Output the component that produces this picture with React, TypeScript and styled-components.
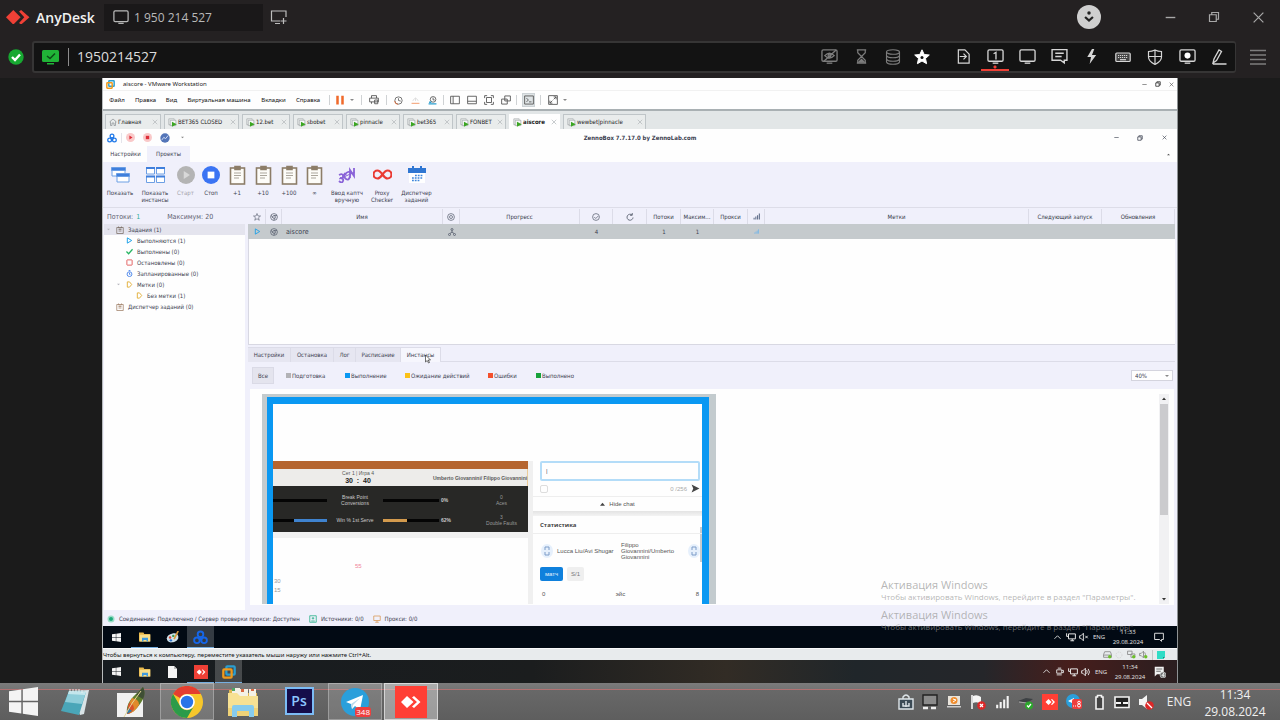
import React from "react";
import styled, { createGlobalStyle, css } from "styled-components";

const ui = `"Open Sans", "Noto Sans", sans-serif`;
const vmFont = `"Noto Sans", "Open Sans", sans-serif`;
const tahoma = `"DejaVu Sans Condensed", "DejaVu Sans", sans-serif`;

const Global = createGlobalStyle`
  * { box-sizing: border-box; }
  html, body { margin: 0; background: #1b1b1b; }
  body { font-family: ${ui}; }
  button, input, select { font: inherit; color: inherit; margin: 0; padding: 0; border: 0; background: none; border-radius: 0; }
  button { display: flex; align-items: center; justify-content: center; white-space: nowrap; }
  svg { display: block; flex: none; }
`;

/* ---------- shared ---------- */

type GlyphProps = {
  w?: number;
  h?: number;
  box?: string;
  color?: string;
  fill?: string;
  sw?: number;
  children: React.ReactNode;
};

const Glyph = ({ w = 16, h, box = "0 0 16 16", color = "currentColor", fill = "none", sw = 1, children }: GlyphProps) => (
  <svg width={w} height={h ?? w} viewBox={box} fill={fill} stroke={color} strokeWidth={sw} aria-hidden="true">
    {children}
  </svg>
);

const Spacer = styled.div`
  flex: 1;
`;

const Slot = styled.button<{ $w: number }>`
  width: ${(p) => p.$w}px;
  height: 100%;
  flex: none;
`;

const Divider = styled.span<{ $before?: number; $after?: number; $h?: number; $color?: string }>`
  width: 1px;
  height: ${(p) => p.$h ?? 10}px;
  flex: none;
  margin: 0 ${(p) => p.$after ?? 0}px 0 ${(p) => p.$before ?? 0}px;
  background: ${(p) => p.$color ?? "#cfd2d4"};
`;

const Shell = styled.div`
  display: flex;
  flex-direction: column;
  min-height: 100vh;
  overflow: hidden;
`;

/* ---------- AnyDesk frame ---------- */

const TitleBar = styled.header`
  display: flex;
  align-items: center;
  height: 36px;
  padding-bottom: 2px;
  background: #242122;
  color: #bdbdbd;
`;

const Brand = styled.div`
  display: flex;
  align-items: center;
  gap: 6px;
  width: 104px;
  padding-left: 6px;
  font-size: 14px;
  font-weight: 600;
  color: #f1f1f1;
  svg {
    color: #ef4036;
  }
`;

const SessionTab = styled.button`
  width: 159px;
  height: 27px;
  justify-content: flex-start;
  gap: 5px;
  padding-left: 9px;
  margin-right: 7px;
  background: #1a1819;
  font-size: 12px;
  color: #b9b9b9;
`;

const Avatar = styled.button`
  width: 24px;
  height: 24px;
  margin-right: 47px;
  border-radius: 50%;
  background: #cfcfcf;
`;

const AddressRow = styled.div`
  display: flex;
  align-items: center;
  height: 42px;
  padding-bottom: 1px;
  background: #242122;
`;

const Online = styled.div`
  width: 32px;
  display: flex;
  justify-content: center;
`;

const AddressBox = styled.div`
  flex: 1;
  display: flex;
  align-items: center;
  height: 32px;
  padding-left: 8px;
  border: 2px solid #363535;
  border-right-width: 1px;
  border-radius: 3px;
  background: #131313;
  color: #cfcfcf;
`;

const AddressInput = styled.input`
  flex: 1;
  min-width: 0;
  height: 24px;
  font-size: 14px;
  color: #dcdcdc;
  outline: none;
`;

const Action = styled(Slot)<{ $dim?: boolean; $active?: boolean }>`
  color: ${(p) => (p.$dim ? "#7d7d7d" : "#d6d6d6")};
  ${(p) =>
    p.$active &&
    css`
      background: radial-gradient(circle at 50% 24px, #ef4036 1px, transparent 2px),
        linear-gradient(#ef4036, #ef4036) bottom / 28px 2px no-repeat;
    `}
`;

/* ---------- remote screen ---------- */

const Remote = styled.main`
  flex: 1;
  position: relative;
  display: flex;
  flex-direction: column;
  margin: 0 102px;
  border-left: 1px solid #b9bcbd;
  border-right: 1px solid #8e9294;
  background: #fefefe;
  font-family: ${vmFont};
  font-size: 6px;
  line-height: 8px;
  color: #222;
`;

const VmTitle = styled.div`
  display: flex;
  align-items: center;
  height: 13px;
  padding-left: 3px;
  border-bottom: 1px solid #f1f1f1;
`;

const VmName = styled.span`
  padding-left: 8px;
`;

const VmMenu = styled.nav`
  display: flex;
  align-items: center;
  height: 20px;
  border-bottom: 2px solid #a9b0b3;
  color: #555;
`;

const MenuItem = styled.button<{ $w: number }>`
  width: ${(p) => p.$w}px;
  height: 100%;
  color: #111;
`;

const ToolSlot = styled(Slot)<{ $on?: boolean }>`
  height: 14px;
  ${(p) =>
    p.$on &&
    css`
      background: #dfe4e6;
      outline: 1px solid #ccd2d5;
      outline-offset: -1px;
    `}
`;

const VmTabs = styled.nav`
  display: flex;
  align-items: flex-end;
  gap: 3px;
  height: 18px;
  padding-left: 2px;
  background: #e2e6e7;
`;

const VmTab = styled.button<{ $w: number; $on?: boolean }>`
  width: ${(p) => p.$w}px;
  height: 15px;
  justify-content: flex-start;
  gap: 1px;
  padding: 0 2px 0 3px;
  border: 1px solid ${(p) => (p.$on ? "#fefefe" : "#bfc5c8")};
  border-bottom: 0;
  background: ${(p) => (p.$on ? "#fefefe" : "#e9ecec")};
  font-weight: ${(p) => (p.$on ? 700 : 400)};
  font-family: ${tahoma};
  span {
    flex: 1;
    text-align: left;
  }
`;

/* ---------- ZennoBox ---------- */

const Zenno = styled.section`
  flex: 1;
  display: flex;
  flex-direction: column;
  font-family: ${tahoma};
  color: #3c4150;
`;

const ZTitle = styled.div`
  display: grid;
  grid-template-columns: 1fr auto 1fr;
  align-items: center;
  height: 17px;
  font-weight: 700;
`;

const Quick = styled.div`
  display: flex;
  align-items: center;
  height: 17px;
`;

const WinButtons = styled(Quick)`
  justify-content: flex-end;
`;

const RibbonTabs = styled.div`
  display: flex;
  height: 16px;
  padding-left: 1px;
`;

const RibbonTab = styled.button<{ $on?: boolean }>`
  width: 43px;
  background: ${(p) => (p.$on ? "#f0f0fb" : "transparent")};
`;

const Ribbon = styled.div`
  display: flex;
  height: 46px;
  background: #f0f0fb;
  border-bottom: 1px solid #dddde8;
`;

const RibbonButton = styled.button<{ $w: number; $off?: boolean }>`
  width: ${(p) => p.$w}px;
  flex-direction: column;
  justify-content: flex-start;
  padding-top: 2px;
  gap: 4px;
  line-height: 7px;
  color: ${(p) => (p.$off ? "#a0a0a8" : "#3c4150")};
  span {
    white-space: pre;
  }
`;

const RibbonArt = styled.i`
  display: flex;
  align-items: center;
  justify-content: center;
  height: 21px;
`;

const Work = styled.div`
  flex: 1;
  display: grid;
  grid-template-columns: 141px minmax(0, 1fr);
  gap: 3px;
  padding: 1px 2px 0 1px;
  background: #f0f0fb;
`;

const Side = styled.aside`
  background: #fefefe;
  margin-bottom: 1px;
`;

const Counts = styled.div`
  display: flex;
  align-items: center;
  gap: 27px;
  height: 15px;
  padding-left: 3px;
  font-size: 7px;
  background: #f0f0fb;
  color: #5d6070;
  b {
    font-weight: 400;
    color: #2fae9a;
    padding-left: 1px;
  }
`;

const Tree = styled.ul`
  list-style: none;
  margin: 0;
  padding: 0;
`;

const TreeRow = styled.li<{ $depth: number; $on?: boolean }>`
  display: flex;
  align-items: center;
  gap: 4px;
  height: 11px;
  padding-left: ${(p) => 3 + p.$depth * 10}px;
  background: ${(p) => (p.$on ? "#e4e4ee" : "transparent")};
`;

const Caret = styled.span`
  display: flex;
  width: 5px;
`;

const Right = styled.div`
  display: flex;
  flex-direction: column;
  min-width: 0;
`;

const TablePane = styled.div`
  height: 136px;
  background: #fefefe;
  box-shadow: inset 1px -1px 0 #d8d8e2;
`;

const Grid = styled.table`
  width: 100%;
  table-layout: fixed;
  border-collapse: separate;
  border-spacing: 0;
  th,
  td {
    height: 15px;
    padding: 0;
    text-align: center;
    font-weight: 400;
  }
  th {
    background: #f0f0fb;
    border-right: 1px solid #dcdce8;
    color: #333847;
  }
  td {
    background: #c5cacd;
  }
  svg {
    margin: 0 auto;
  }
`;

const NameCell = styled.td`
  && {
    text-align: left;
    padding-left: 4px;
    font-size: 7px;
  }
`;

const PaneTabs = styled.div`
  display: flex;
  height: 15px;
  margin-top: 2px;
  border-bottom: 1px solid #dcdce8;
`;

const PaneTab = styled.button<{ $w: number; $on?: boolean }>`
  width: ${(p) => p.$w}px;
  height: 15px;
  border: 1px solid #dcdce8;
  border-left-width: 0;
  border-bottom: 0;
  background: ${(p) => (p.$on ? "#f6f6fd" : "#e6e6f1")};
`;

const Filters = styled.div`
  display: flex;
  align-items: center;
  height: 27px;
  padding: 0 2px 0 4px;
`;

const AllButton = styled.button`
  width: 22px;
  height: 17px;
  margin-right: 12px;
  border: 1px solid #dadae6;
  background: #e4e4ee;
`;

const Legend = styled.button<{ $w: number; $c: string }>`
  width: ${(p) => p.$w}px;
  justify-content: flex-start;
  gap: 1px;
  &::before {
    content: "";
    width: 5px;
    height: 5px;
    background: ${(p) => p.$c};
  }
`;

const ZoomBox = styled.label`
  display: flex;
  align-items: center;
  width: 42px;
  height: 11px;
  padding-right: 3px;
  border: 1px solid #d4d4de;
  background: #fefefe;
`;

const ZoomSelect = styled.select`
  flex: 1;
  appearance: none;
  padding-left: 3px;
  line-height: 8px;
  outline: none;
`;

const Viewer = styled.div`
  flex: 1;
  display: flex;
  justify-content: space-between;
  align-items: stretch;
  margin: 0 1px 6px 2px;
  padding: 5px 5px 1px 12px;
  background: #fefefe;
`;

const Scroll = styled.div`
  display: flex;
  flex-direction: column;
  align-items: center;
  width: 10px;
  background: #f1f1f3;
`;

const Thumb = styled.div`
  width: 8px;
  height: 111px;
  margin-bottom: auto;
  background: #cbcbce;
`;

/* ---------- browser instance preview ---------- */

const Instance = styled.div`
  display: flex;
  width: 454px;
  padding: 3px 7px 0 5px;
  background: #c3cbce;
`;

const Page = styled.div`
  flex: 1;
  display: grid;
  grid-template-columns: 255px 5px minmax(0, 1fr);
  padding-top: 57px;
  border: 7px solid #0a98f2;
  border-left-width: 6px;
  border-bottom: 0;
  background: #fefefe;
  font-family: "Liberation Sans", sans-serif;
  font-size: 6px;
  line-height: 6px;
`;

const Clay = styled.div`
  height: 8px;
  background: #b5652f;
`;

const Score = styled.div`
  display: grid;
  grid-template-columns: 150px 1fr;
  align-items: center;
  height: 17px;
  padding: 0 3px 0 10px;
  border-right: 1px solid #eccb98;
  background: #edecea;
  color: #555;
  font-size: 5px;
  text-align: center;
`;

const Points = styled.strong`
  display: block;
  font-size: 7px;
  line-height: 9px;
  color: #222;
  white-space: pre;
`;

const Player = styled.b`
  justify-self: end;
  white-space: nowrap;
  color: #5a5a5a;
`;

const Stats = styled.div`
  height: 46px;
  padding-top: 4px;
  background: #282826;
  color: #c9c9c9;
  font-size: 5px;
`;

const StatRow = styled.div`
  display: grid;
  grid-template-columns: 54px 56px 56px 36px 1fr;
  align-items: center;
  height: 20px;
  text-align: center;
  div:last-child {
    color: #9a9a9a;
  }
`;

const Bar = styled.i<{ $from: number; $to: number; $c: string }>`
  height: 3px;
  background: linear-gradient(
    90deg,
    #050505 ${(p) => p.$from}%,
    ${(p) => p.$c} ${(p) => p.$from}% ${(p) => p.$to}%,
    #050505 ${(p) => p.$to}%
  );
`;

const Percent = styled.b`
  padding-left: 2px;
  text-align: left;
  font-size: 5px;
`;

const Strip = styled.div`
  height: 6px;
  background: #f1f1f1;
`;

const Gutter = styled.div`
  background: #f0f0f0;
`;

const Feed = styled.div`
  display: flex;
  flex-direction: column;
  gap: 3px;
  padding: 25px 1px 0;
  color: #999;
`;

const Hot = styled.span`
  padding: 0 0 6px 81px;
  color: #f0849b;
`;

const Chat = styled.div`
  display: flex;
  flex-direction: column;
  background: linear-gradient(#c9cbcd, #c9cbcd) right 66px / 2px 35px no-repeat;
  color: #555;
`;

const ChatInput = styled.input`
  height: 20px;
  margin: 0 2px 0 7px;
  padding-left: 4px;
  border: 2px solid #b3dcf8;
  border-radius: 2px;
  outline: none;
`;

const ChatTools = styled.div`
  display: flex;
  align-items: center;
  height: 16px;
  padding: 0 2px 0 7px;
  gap: 4px;
  border-bottom: 1px solid #eee;
  color: #aaa;
`;

const Tick = styled.input`
  appearance: none;
  && {
    width: 8px;
    height: 8px;
    margin-right: auto;
    border: 1px solid #ddd;
    border-radius: 2px;
  }
`;

const HideChat = styled.button`
  height: 14px;
  gap: 4px;
`;

const Band = styled.div`
  height: 5px;
  background: linear-gradient(#e3e3e3, #f4f4f4);
`;

const StatsHead = styled.b`
  padding: 6px 0 5px 7px;
  border-bottom: 1px solid #eee;
  font-family: ${ui};
  color: #444;
`;

const Versus = styled.div`
  display: grid;
  grid-template-columns: 12px 60px 1fr 14px;
  align-items: center;
  column-gap: 4px;
  height: 33px;
  padding-left: 8px;
`;

const Shirt = styled.i`
  display: flex;
  align-items: center;
  justify-content: center;
  width: 12px;
  height: 14px;
  border-radius: 50%;
  background: #e6f0fc;
`;

const Sets = styled.div`
  display: flex;
  gap: 4px;
  padding-left: 7px;
`;

const SetButton = styled.button<{ $on?: boolean }>`
  width: ${(p) => (p.$on ? 23 : 17)}px;
  height: 14px;
  border-radius: 2px;
  background: ${(p) => (p.$on ? "#0f80dc" : "#efefef")};
  color: ${(p) => (p.$on ? "#e8f3fc" : "#777")};
`;

const Totals = styled.div`
  display: flex;
  justify-content: space-between;
  padding: 10px 3px 0 9px;
`;

/* ---------- bottom bars ---------- */

const ZStatus = styled.footer`
  display: flex;
  align-items: center;
  gap: 4px;
  height: 15px;
  padding-left: 4px;
  background: #f0f0fb;
  span {
    padding-right: 5px;
  }
`;

const Taskbar = styled.footer<{ $tone: string; $h: number }>`
  display: flex;
  align-items: center;
  height: ${(p) => p.$h}px;
  padding-right: 7px;
  background: ${(p) => p.$tone};
  color: #e6e6e6;
  font-family: ${ui};
`;

const Apps = styled.div`
  display: flex;
  gap: 1px;
  height: 100%;
`;

const App28 = styled.button<{ $run?: boolean; $on?: boolean }>`
  width: 27px;
  height: 100%;
  background: ${(p) => (p.$on ? "rgba(255,255,255,.2)" : "transparent")};
  box-shadow: ${(p) => (p.$run ? "inset 0 -1px #76aee0" : "none")};
`;

const SmallClock = styled.time`
  width: 40px;
  text-align: center;
  line-height: 10px;
  white-space: pre;
`;

const VmStatus = styled.footer`
  display: flex;
  align-items: center;
  height: 12px;
  padding: 0 12px 0 0;
  border-top: 1px solid #fafafa;
  background: #e8ebed;
  color: #111;
`;

const Host = styled.footer`
  display: flex;
  height: 37px;
  background: linear-gradient(#7b7b7b, #747474 6px, #b07272 6px, #b07272 7px, #686868 7px, #5e5e5e);
  color: #f0f0f0;
  font-size: 12px;
  line-height: 17px;
`;

const StartButton = styled.button`
  width: 46px;
`;

const HostApp = styled.button<{ $open?: boolean; $on?: boolean }>`
  position: relative;
  width: 54px;
  margin-left: 2px;
  ${(p) =>
    p.$open &&
    css`
      background: rgba(255, 255, 255, 0.14);
      box-shadow: inset 0 0 0 1px rgba(255, 255, 255, 0.28);
    `}
  ${(p) =>
    p.$on &&
    css`
      background: rgba(255, 255, 255, 0.38);
      box-shadow: inset 0 0 0 1px rgba(255, 255, 255, 0.55);
    `}
`;

const Badge = styled.span`
  position: absolute;
  right: 11px;
  bottom: 3px;
  padding: 0 1px;
  border-radius: 3px;
  background: #ee3e3e;
  font-size: 8px;
  line-height: 10px;
  color: #fff;
`;

const PsTile = styled.span`
  display: flex;
  align-items: center;
  justify-content: center;
  width: 29px;
  height: 28px;
  margin-bottom: 2px;
  border: 2px solid #7cbcf5;
  background: #150d4a;
  color: #8cc6ff;
  font-size: 14px;
  font-weight: 600;
`;

const Lang = styled(Slot)`
  font-size: 12px;
`;

const HostClock = styled.time`
  width: 70px;
  margin-right: 10px;
  padding-top: 3px;
  text-align: center;
  white-space: pre;
`;

const Watermark = styled.div<{ $bottom: number }>`
  position: absolute;
  right: 32px;
  bottom: ${(p) => p.$bottom}px;
  width: 264px;
  color: rgba(150, 150, 150, 0.7);
  font-family: ${ui};
  font-size: 8px;
  line-height: 12px;
  white-space: nowrap;
  pointer-events: none;
  strong {
    display: block;
    font-size: 11px;
    font-weight: 400;
    line-height: 13px;
  }
`;

const Pointer = styled.div`
  position: absolute;
  left: 322px;
  top: 276px;
`;

/* ---------- icons ---------- */

const Screen = ({ children, w = 18 }: { children?: React.ReactNode; w?: number }) => (
  <Glyph w={w} h={(w * 16) / 18} box="0 0 18 16" sw={1.4}>
    <rect x="1" y="1" width="16" height="12" rx="1.4" />
    <path d="M6 15h6" />
    {children}
  </Glyph>
);

const WinLogo = ({ w }: { w: number }) => (
  <Glyph w={w} box="0 0 20 20" color="none" fill="#f4f4f4">
    <path d="M0 3 8.5 1.8V9.5H0zM9.5 1.6 20 0v9.5H9.5zM0 10.5h8.5v7.7L0 17zM9.5 10.5H20V20L9.5 18.4z" />
  </Glyph>
);

const AnyMark = ({ w }: { w: number }) => (
  <Glyph w={w} h={(w * 14) / 23} box="0 0 23 14" color="none" fill="currentColor">
    <path d="M7 0 14 7 7 14 0 7z" />
    <path d="M12.500 1.500 14.500 0l8 7-8 7-2-1.500L17.500 7z" />
  </Glyph>
);

const Trefoil = ({ w, c = "#1f78e8" }: { w: number; c?: string }) => (
  <Glyph w={w} color={c} sw={2}>
    <circle cx="8" cy="4.6" r="3" />
    <circle cx="4.2" cy="11" r="3" />
    <circle cx="11.8" cy="11" r="3" />
    <path d="M8 7v3M6 10h4" />
  </Glyph>
);

const VmwareMark = ({ w }: { w: number }) => (
  <Glyph w={w} sw={2.6}>
    <rect x="5" y="1.5" width="9.5" height="9.5" rx="1" stroke="#2b9fd0" />
    <rect x="1.5" y="5" width="9.5" height="9.5" rx="1" stroke="#f09a1c" />
  </Glyph>
);

const Folder = ({ w }: { w: number }) => (
  <Glyph w={w} box="0 0 32 32" color="none">
    <path d="M2 4h8l2 3h18v22H2z" fill="#dfb752" />
    <path d="M5 2h8v8H5zM13 3h8v7h-8zM22 3h7v7h-7z" fill="#f4f1e6" />
    <path d="M5 2h3v3H5z" fill="#4ca564" />
    <path d="M14 3h3v3h-3zM24 3h3v2h-3z" fill="#d9663f" />
    <path d="M1 7h9l3 3h18v20H1z" fill="#f7e193" />
    <path d="M1 22h30v8H1z" fill="#efd277" />
    <path d="M5 31V21q0-2 2-2h18q2 0 2 2v10h-5v-6H10v6z" fill="#86cbee" />
  </Glyph>
);

const SmallFolder = () => (
  <Glyph w={12} h={12} color="none">
    <path d="M0 2h6l1 2h8v10H0z" fill="#e8b84a" />
    <path d="M1 5h14v9H1z" fill="#f9df8c" />
    <path d="M4 14V9h8v5h-2v-2H6v2z" fill="#3f9be0" />
  </Glyph>
);

const MachineIcon = () => (
  <Glyph w={9} color="#8b9194">
    <path d="M4 12H1.5V1.5H11V3M4 4h10v9.500H4z" fill="#f6f8f8" />
    <path d="M7 6.500 15.500 11 7 15.500z" fill="#3aa521" stroke="none" />
  </Glyph>
);

const Cross = ({ w = 6, c = "#b6bbbe" }: { w?: number; c?: string }) => (
  <Glyph w={w} color={c} sw={w > 10 ? 1.5 : 2}>
    <path d="M2 2l12 12M14 2 2 14" />
  </Glyph>
);

const Minus = ({ w, c }: { w: number; c: string }) => (
  <Glyph w={w} color={c} sw={2}>
    <path d="M1 8h14" />
  </Glyph>
);

const Restore = ({ w, c, sw = 2 }: { w: number; c: string; sw?: number }) => (
  <Glyph w={w} color={c} sw={sw}>
    <path d="M2 5h9v9H2zM5 5V2h9v9h-3" />
  </Glyph>
);

const Down = ({ c = "#888", w = 4 }: { c?: string; w?: number }) => (
  <Glyph w={w} box="0 0 8 8" color="none" fill={c}>
    <path d="M0 2h8L4 6z" />
  </Glyph>
);

const Clipboard = () => (
  <Glyph w={17} h={20} box="0 0 17 20" color="#8c7d68" sw={1.6}>
    <rect x="1.500" y="3" width="14" height="16" fill="#fdfcf8" />
    <path d="M6 1.500h5v3H6z" fill="#8c7d68" />
    <path d="M5 8h7M5 10.500h7M5 13h5" stroke="#aaa59b" strokeWidth="1" />
  </Glyph>
);

const Disc = ({ w, outer, inner, square }: { w: number; outer: string; inner: string; square?: boolean }) => (
  <Glyph w={w} color="none">
    <circle cx="8" cy="8" r="8" fill={outer} />
    {square ? <path d="M5 5h6v6H5z" fill={inner} /> : <path d="M6 4.500 11.500 8 6 11.500z" fill={inner} />}
  </Glyph>
);

const Tag = () => (
  <Glyph w={7} color="#e0aa2c" sw={2}>
    <path d="M3 2h5l5 6-5 6H3z" />
  </Glyph>
);

const Signal = ({ c, w = 8 }: { c: string; w?: number }) => (
  <Glyph w={w} color={c} sw={2.4}>
    <path d="M2.500 15v-4M6.500 15V8M10.500 15V5M14.500 15V1" />
  </Glyph>
);

const Up = ({ w = 7 }: { w?: number }) => (
  <Glyph w={w} sw={2}>
    <path d="M1 11l7-7 7 7" />
  </Glyph>
);

const Net = () => (
  <Glyph w={10} sw={1.6}>
    <path d="M4 3h11v8H4zM7 14h6M10 11v3M1 2v5h3" />
  </Glyph>
);

const Speaker = ({ muted }: { muted?: boolean }) => (
  <Glyph w={10} sw={1.5}>
    <path d="M1 6h2l4-4v12l-4-4H1z" />
    {muted ? <path d="M10 6l4 4M14 6l-4 4" /> : <path d="M9 5q2 3 0 6M11.500 3q4 5 0 10" />}
  </Glyph>
);

const Note = () => (
  <Glyph w={10} sw={1.5}>
    <path d="M1 2h14v10h-3v3l-3-3H1z" />
  </Glyph>
);

const Tasks = ({ c = "#7d726b" }: { c?: string }) => (
  <Glyph w={8} color={c} sw={1.6}>
    <path d="M1.500 3h13v12h-13zM5 1v3h6V1M5 7h6M5 10h6" />
  </Glyph>
);

/* ---------- data ---------- */

const vmTabs: [string, number][] = [
  ["Главная", 56],
  ["BET365 CLOSED", 75],
  ["12.bet", 48],
  ["sbobet", 50],
  ["pinnacle", 54],
  ["bet365", 50],
  ["FONBET", 50],
  ["aiscore", 51],
  ["wewbet|pinnacle", 83],
];

const menu: [string, number][] = [
  ["Файл", 28],
  ["Правка", 29],
  ["Вид", 23],
  ["Виртуальная машина", 72],
  ["Вкладки", 37],
  ["Справка", 32],
];

const legend: [string, string, number][] = [
  ["Подготовка", "#b2b2b6", 59],
  ["Выполнение", "#0a98f2", 60],
  ["Ожидание действий", "#fbc117", 83],
  ["Ошибки", "#f4502c", 48],
  ["Выполнено", "#17a23a", 40],
];

const paneTabs: [string, number][] = [
  ["Настройки", 43],
  ["Остановка", 43],
  ["Лог", 22],
  ["Расписание", 45],
  ["Инстансы", 40],
];

const columns = [18, 16, 161, 17, 120, 33, 34, 34, 33, 34, 17, 0, 73, 73];

/* ---------- parts ---------- */

const AnyDeskBars = () => (
  <>
    <TitleBar>
      <Brand>
        <AnyMark w={24} />
        AnyDesk
      </Brand>
      <SessionTab>
        <Screen w={16} />1 950 214 527
      </SessionTab>
      <button aria-label="Новая вкладка">
        <Glyph w={17} h={16} box="0 0 17 16" sw={1.2}>
          <path d="M10 12H1.500V2H16v6M5 14.500h5M13.500 9v6M10.500 12h6" />
        </Glyph>
      </button>
      <Spacer />
      <Avatar aria-label="Профиль">
        <Glyph w={14} color="#222" sw={2.6}>
          <circle cx="8" cy="3.500" r="2" fill="#222" stroke="none" />
          <path d="M3.500 8 8 12l4.500-4" />
        </Glyph>
      </Avatar>
      <Slot $w={44} aria-label="Свернуть"><Minus w={11} c="#a8a8a8" /></Slot>
      <Slot $w={44} aria-label="Восстановить"><Restore w={12} c="#a8a8a8" sw={1.6} /></Slot>
      <Slot $w={44} aria-label="Закрыть"><Cross w={13} c="#a8a8a8" /></Slot>
    </TitleBar>
    <AddressRow>
      <Online>
        <Glyph w={16} color="#fff" sw={2.4}>
          <circle cx="8" cy="8" r="7.700" fill="#17a831" stroke="none" />
          <path d="M4 8l3 3 5-5.500" />
        </Glyph>
      </Online>
      <AddressBox>
        <Glyph w={17} h={16} box="0 0 17 16" color="none">
          <rect x="0" y="1" width="17" height="12" rx="1.500" fill="#20b437" />
          <path d="M5 14h7v1.500H5z" fill="#20b437" />
          <path d="M5 7l3 2.500 5-5" stroke="#0b4d17" strokeWidth="1.600" />
        </Glyph>
        <Divider $h={18} $before={9} $after={8} $color="#8d8d8d" />
        <AddressInput aria-label="Адрес" defaultValue="1950214527" />
        <Action $w={32} $dim aria-label="Приватность">
          <Screen w={17}>
            <path d="M4 7q5-5 10 0-5 5-10 0zM3 13 16 1" />
            <circle cx="9" cy="7" r="1.500" />
          </Screen>
        </Action>
        <Action $w={32} $dim aria-label="Ожидание">
          <Glyph w={15} sw={1.3}>
            <path d="M3 1h10M3 15h10M4 1v3l4 4-4 4v3M12 1v3L8 8l4 4v3" />
            <path d="M5 14h6l-3-3z" fill="currentColor" />
          </Glyph>
        </Action>
        <Action $w={32} $dim aria-label="Данные">
          <Glyph w={16} sw={1.1}>
            <ellipse cx="8" cy="3" rx="6.500" ry="2.300" />
            <path d="M1.500 3v10c1 3 12 3 13 0V3M1.500 6.500c1 3 12 3 13 0M1.500 10c1 3 12 3 13 0" />
          </Glyph>
        </Action>
        <Action $w={26} aria-label="Избранное">
          <Glyph w={16} sw={1} color="#fff" fill="#fff">
            <path d="M8 .8l2.200 4.700 5.100.5-3.800 3.500 1.100 5.200L8 12l-4.600 2.700 1.100-5.200L.7 6l5.100-.5z" />
            <circle cx="8" cy="8.500" r="1.500" fill="#131313" stroke="none" />
          </Glyph>
        </Action>
        <Divider $h={1} $after={11} $color="transparent" />
        <Action $w={32} aria-label="Передача файлов">
          <Glyph w={15} sw={1.3}>
            <path d="M2.500 1h7L14 5.500V15H2.500zM4 8h7M8 5l3 3-3 3" />
          </Glyph>
        </Action>
        <Action $w={32} $active aria-label="Монитор 1">
          <Screen w={17}><path d="M7 5 9.500 3.500V11" /></Screen>
        </Action>
        <Action $w={32} aria-label="Экран"><Screen w={17} /></Action>
        <Action $w={32} aria-label="Чат">
          <Glyph w={17} sw={1.3}>
            <path d="M1 1.500h14v10h-2.500V14L9 11.500H1zM4 5h8M4 8h6" />
          </Glyph>
        </Action>
        <Action $w={32} aria-label="Действия">
          <Glyph w={15} color="none" fill="currentColor">
            <path d="M8.500 0 3.500 8.500h4L6 16l7-9.500H8.500L11 0z" />
          </Glyph>
        </Action>
        <Action $w={32} aria-label="Клавиатура">
          <Glyph w={16} sw={1.2}>
            <rect x=".8" y="4" width="14.400" height="8.500" rx="1" fill="#444" />
            <path d="M3 6.500h10M3 8.500h10" strokeDasharray="1.200 .8" />
            <path d="M5 10.700h6" />
          </Glyph>
        </Action>
        <Action $w={32} aria-label="Права">
          <Glyph w={16} sw={1.2}>
            <path d="M8 1q-3 1.500-6.500 1.500V8c0 4 3.500 6 6.500 7.500C11 14 14.500 12 14.500 8V2.500Q11 2.500 8 1zM8 1.500v14M1.500 7.500h13" />
          </Glyph>
        </Action>
        <Action $w={32} aria-label="Запись">
          <Screen w={17}><circle cx="9" cy="7" r="3.200" fill="#fff" stroke="none" /></Screen>
        </Action>
        <Action $w={32} aria-label="Рисование">
          <Glyph w={16} sw={1.3}>
            <path d="M2 14l1-4 5-9 2.500 1.500-5 9zM2 15h13.500" />
          </Glyph>
        </Action>
      </AddressBox>
      <Action $w={44} $dim aria-label="Меню">
        <Glyph w={16} sw={1.3}>
          <path d="M0 1.500h16M0 6h16M0 10.500h16M0 15h16" />
        </Glyph>
      </Action>
    </AddressRow>
  </>
);

const VmwareBars = () => (
  <>
    <VmTitle>
      <VmwareMark w={9} />
      <VmName>aiscore - VMware Workstation</VmName>
      <Spacer />
      <Slot $w={13} aria-label="Свернуть"><Minus w={5} c="#555" /></Slot>
      <Slot $w={14} aria-label="Восстановить"><Restore w={6} c="#222" /></Slot>
      <Slot $w={12} aria-label="Закрыть"><Cross w={5} c="#555" /></Slot>
    </VmTitle>
    <VmMenu>
      {menu.map(([t, w]) => (
        <MenuItem key={t} $w={w}>{t}</MenuItem>
      ))}
      <Divider $before={5} $after={3} />
      <ToolSlot $w={14} aria-label="Пауза">
        <Glyph w={10} color="#f0692a" sw={4}><path d="M4 1v14M12 1v14" /></Glyph>
      </ToolSlot>
      <ToolSlot $w={9} aria-label="Питание"><Down /></ToolSlot>
      <Divider $before={5} $after={3} />
      <ToolSlot $w={17} aria-label="Ctrl+Alt+Del">
        <Glyph w={10} sw={1.4}><path d="M4 5V1h8v4M1 5h14v6H1zM9 8h5v6H9zM4 11v3" /></Glyph>
      </ToolSlot>
      <Divider $before={4} $after={3} />
      <ToolSlot $w={17} aria-label="Снимок">
        <Glyph w={9} sw={1.4}><circle cx="8" cy="8" r="6.500" /><path d="M8 4v4l4 1" /><path d="M1 9a7 7 0 0 0 6 6" stroke="#f0692a" /></Glyph>
      </ToolSlot>
      <ToolSlot $w={17} aria-label="Вернуть снимок">
        <Glyph w={9} sw={1.6} color="#ddd"><path d="M3 9q5-10 10 0M8 3v6" /><path d="M1 13h14" stroke="#f0925f" /></Glyph>
      </ToolSlot>
      <ToolSlot $w={17} aria-label="Менеджер снимков">
        <Glyph w={9} sw={1.5}><circle cx="9" cy="6" r="5" /><path d="M9 3v4h3" /><path d="M1 14h14M2 11h4" stroke="#2b9fd0" strokeWidth="2.500" /></Glyph>
      </ToolSlot>
      <Divider $before={2} $after={2} />
      <ToolSlot $w={17} aria-label="Библиотека">
        <Glyph w={10} sw={1.4}><path d="M1 2h14v12H1zM5 2v12" /></Glyph>
      </ToolSlot>
      <ToolSlot $w={17} aria-label="Эскизы">
        <Glyph w={10} sw={1.4}><path d="M1 2h14v12H1zM1 10h14" /></Glyph>
      </ToolSlot>
      <ToolSlot $w={17} aria-label="Полный экран">
        <Glyph w={10} sw={1.4}><path d="M1 5V1h4M11 1h4v4M15 11v4h-4M5 15H1v-4M4 4h8v8H4z" /></Glyph>
      </ToolSlot>
      <ToolSlot $w={17} aria-label="Unity">
        <Glyph w={10} sw={1.4}><path d="M6 1.500h9v8H6zM1 6.500h9v8H1z" /></Glyph>
      </ToolSlot>
      <Divider $before={2} $after={5} />
      <ToolSlot $w={13} $on aria-label="Консоль">
        <Glyph w={10} sw={1.4}><path d="M1 1.500h14v13H1zM4 5l3 3-3 3M8 11h4" /></Glyph>
      </ToolSlot>
      <Divider $before={5} $after={5} />
      <ToolSlot $w={14} aria-label="Растянуть">
        <Glyph w={10} sw={1.4}><path d="M1 1h14v14H1zM9 3h4v4M13 3 9 7M3 9v4h4M3 13l4-4" /></Glyph>
      </ToolSlot>
      <ToolSlot $w={9} aria-label="Режим"><Down /></ToolSlot>
    </VmMenu>
    <VmTabs>
      {vmTabs.map(([t, w], i) => (
        <VmTab key={t} $w={w} $on={t === "aiscore"}>
          {i === 0 ? (
            <Glyph w={8} color="#8b9194" sw={1.4}><path d="M1 8l7-6 7 6M3 7v8h3v-5h4v5h3V7" /></Glyph>
          ) : (
            <MachineIcon />
          )}
          <span>{t}</span>
          <Cross w={6} />
        </VmTab>
      ))}
    </VmTabs>
  </>
);

const ZennoTop = () => (
  <>
    <ZTitle>
      <Quick>
        <Slot $w={18} aria-label="ZennoBox"><Trefoil w={10} /></Slot>
        <Divider $color="#e4e4ea" />
        <Slot $w={17} aria-label="Старт"><Disc w={9} outer="#f9c9c9" inner="#dd2d38" /></Slot>
        <Slot $w={17} aria-label="Стоп"><Disc w={9} outer="#f9c9c9" inner="#dd2d38" square /></Slot>
        <Slot $w={17} aria-label="Статистика">
          <Glyph w={10} color="#dfe7fb" sw={1.4}>
            <circle cx="8" cy="8" r="7.500" fill="#5375b8" stroke="none" />
            <path d="M3 11l3-4 3 2 4-5" />
          </Glyph>
        </Slot>
        <Slot $w={18} aria-label="Ещё"><Down w={3} /></Slot>
      </Quick>
      <span>ZennoBox 7.7.17.0 by ZennoLab.com</span>
      <WinButtons>
        <Slot $w={24} aria-label="Свернуть"><Minus w={5} c="#3c4150" /></Slot>
        <Slot $w={24} aria-label="Восстановить"><Restore w={6} c="#3c4150" /></Slot>
        <Slot $w={25} aria-label="Закрыть"><Cross w={5} c="#3c4150" /></Slot>
      </WinButtons>
    </ZTitle>
    <RibbonTabs>
      <RibbonTab>Настройки</RibbonTab>
      <RibbonTab $on>Проекты</RibbonTab>
      <Spacer />
      <Slot $w={17} aria-label="Свернуть ленту">
        <Glyph w={3} box="0 0 8 8" color="none" fill="#555"><path d="M0 6h8L4 2z" /></Glyph>
      </Slot>
    </RibbonTabs>
    <Ribbon>
      <RibbonButton $w={34}>
        <RibbonArt>
          <Glyph w={19} h={18} box="0 0 19 18" color="#6c9fe4">
            <path d="M1 2h13v8H1z" fill="#fff" /><path d="M.5 1.500h14v3H.5z" fill="#3f7fdc" />
            <path d="M6 8h12v8H6z" fill="#fff" /><path d="M5.500 7.500h13v3h-13z" fill="#3f7fdc" />
          </Glyph>
        </RibbonArt>
        <span>Показать</span>
      </RibbonButton>
      <RibbonButton $w={36}>
        <RibbonArt>
          <Glyph w={19} h={18} box="0 0 19 18" color="#6c9fe4">
            <path d="M.5 2h8v6h-8zM10.500 2h8v6h-8zM.5 10.500h8v6h-8zM10.500 10.500h8v6h-8z" fill="#fff" />
            <path d="M0 2h9M10 2h9M0 10.500h9M10 10.500h9" strokeWidth="2" stroke="#3f7fdc" />
          </Glyph>
        </RibbonArt>
        <span>{"Показать\nинстансы"}</span>
      </RibbonButton>
      <RibbonButton $w={25} $off>
        <RibbonArt><Disc w={18} outer="#b4b4b4" inner="#d8d8d8" /></RibbonArt>
        <span>Старт</span>
      </RibbonButton>
      <RibbonButton $w={26}>
        <RibbonArt><Disc w={18} outer="#3b74f3" inner="#fff" square /></RibbonArt>
        <span>Стоп</span>
      </RibbonButton>
      {["+1", "+10", "+100", "∞"].map((t, i) => (
        <RibbonButton key={t} $w={i === 3 ? 25 : 26}>
          <RibbonArt><Clipboard /></RibbonArt>
          <span>{t}</span>
        </RibbonButton>
      ))}
      <RibbonButton $w={40}>
        <RibbonArt>
          <Glyph w={18} h={16} box="0 0 18 16" color="#8a63d8" sw={1.8}>
            <path d="M1 8q4-2 4 1t-3 2q4 0 3 3t-4 0M7 6q-2 4 1 6t4-3-2-4-2 3M12 11V3l4 6V1" />
            <path d="M1 12 17 5" strokeWidth="1" />
          </Glyph>
        </RibbonArt>
        <span>{"Ввод каптч\nвручную"}</span>
      </RibbonButton>
      <RibbonButton $w={30}>
        <RibbonArt>
          <Glyph w={19} h={11} box="0 0 19 11" color="#ea3a33" sw={2.2}>
            <path d="M9.500 5.500C7 2 5.500 1.500 4.500 1.500a4 4 0 0 0 0 8c1 0 2.500-.5 5-4s4-4 5-4a4 4 0 0 1 0 8c-1 0-2.500-.5-5-4z" />
          </Glyph>
        </RibbonArt>
        <span>{"Proxy\nChecker"}</span>
      </RibbonButton>
      <RibbonButton $w={39}>
        <RibbonArt>
          <Glyph w={18} h={18} box="0 0 18 18" color="none">
            <path d="M1 2h16v15H1z" fill="#fff" /><path d="M0 2h18v5H0zM4 0h2v3H4zM12 0h2v3h-2z" fill="#2f76d2" />
            <path d="M7 9.500h8M4 12h11M4 14.500h8" stroke="#3f86dc" strokeWidth="1.500" strokeDasharray="1.800 1" />
          </Glyph>
        </RibbonArt>
        <span>{"Диспетчер\nзаданий"}</span>
      </RibbonButton>
    </Ribbon>
  </>
);

const Sidebar = () => (
  <Side>
    <Counts>
      <span>Потоки: <b>1</b></span>
      <span>Максимум: 20</span>
    </Counts>
    <Tree>
      <TreeRow $depth={0} $on>
        <Caret><Down w={3} c="#b5b5bd" /></Caret><Tasks />Задания (1)
      </TreeRow>
      <TreeRow $depth={1}>
        <Caret /><Glyph w={7} color="#1ba0e8" sw={2.2}><path d="M3 2l10 6-10 6z" /></Glyph>Выполняются (1)
      </TreeRow>
      <TreeRow $depth={1}>
        <Caret /><Glyph w={7} color="#27b562" sw={3}><path d="M1 8l5 5 9-10" /></Glyph>Выполнены (0)
      </TreeRow>
      <TreeRow $depth={1}>
        <Caret /><Glyph w={7} color="#e05454" sw={2}><rect x="2" y="2" width="12" height="12" rx="1" /></Glyph>Остановлены (0)
      </TreeRow>
      <TreeRow $depth={1}>
        <Caret /><Glyph w={7} color="#3f7de8" sw={2}><circle cx="8" cy="9.500" r="5.500" /><path d="M6 1h4M8 6v4h2" /></Glyph>Запланированные (0)
      </TreeRow>
      <TreeRow $depth={1}>
        <Caret><Down w={3} c="#b5b5bd" /></Caret><Tag />Метки (0)
      </TreeRow>
      <TreeRow $depth={2}>
        <Caret /><Tag />Без метки (1)
      </TreeRow>
      <TreeRow $depth={0}>
        <Caret /><Tasks c="#a58770" />Диспетчер заданий (0)
      </TreeRow>
    </Tree>
  </Side>
);

const Globe = () => (
  <Glyph w={8} color="#5b6272" sw={1.5}>
    <circle cx="8" cy="8" r="6.800" /><circle cx="8" cy="8" r="2.800" /><path d="M8 5h6M5.500 9.500l-3-5M10.500 9.500l-3 5" />
  </Glyph>
);

const ProjectTable = () => (
  <TablePane>
    <Grid>
      <colgroup>
        {columns.map((w, i) => (
          <col key={i} style={w ? { width: w } : undefined} />
        ))}
      </colgroup>
      <thead>
        <tr>
          <th><Glyph w={8} color="#5b6272" sw={1.3}><path d="M8 1l2 5h5l-4 3.500 1.500 5L8 11.500l-4.500 3 1.500-5L1 6h5z" /></Glyph></th>
          <th><Globe /></th>
          <th>Имя</th>
          <th><Glyph w={8} color="#5b6272" sw={1.5}><circle cx="8" cy="8" r="6.800" /><circle cx="8" cy="8" r="3" /></Glyph></th>
          <th>Прогресс</th>
          <th><Glyph w={8} color="#5b6272" sw={1.5}><circle cx="8" cy="8" r="6.800" /><path d="M4.500 8l3 3 5-5" /></Glyph></th>
          <th><Glyph w={8} color="#5b6272" sw={1.8}><path d="M12 4A6 6 0 1 0 14 9M12.500 0v4.500H8" /></Glyph></th>
          <th>Потоки</th>
          <th>Максим...</th>
          <th>Прокси</th>
          <th><Signal c="#5b6a86" w={7} /></th>
          <th>Метки</th>
          <th>Следующий запуск</th>
          <th>Обновления</th>
        </tr>
      </thead>
      <tbody>
        <tr>
          <td><Glyph w={7} color="#1ba0e8" sw={2}><path d="M3 2l10 6-10 6z" /></Glyph></td>
          <td><Globe /></td>
          <NameCell>aiscore</NameCell>
          <td><Glyph w={8} color="#5b6272" sw={1.8}><circle cx="8" cy="3" r="2" /><circle cx="3" cy="13" r="2" /><circle cx="13" cy="13" r="2" /><path d="M8 5v3l-4 3M8 8l4 3" /></Glyph></td>
          <td />
          <td>4</td>
          <td />
          <td>1</td>
          <td>1</td>
          <td />
          <td><Signal c="#6fb4ea" w={5} /></td>
          <td />
          <td />
          <td />
        </tr>
      </tbody>
    </Grid>
  </TablePane>
);

const ShirtIcon = () => (
  <Shirt>
    <Glyph w={6} h={10} box="0 0 6 10" color="#7d9cc8"><path d="M1 4V1h4v3M1 6v3h4V6" /></Glyph>
  </Shirt>
);

const BrowserInstance = () => (
  <Instance>
    <Page>
      <div>
        <Clay />
        <Score>
          <div>Сет 1 | Игра 4<Points>30  :  40</Points></div>
          <Player>Umberto Giovannini/ Filippo Giovannini</Player>
        </Score>
        <Stats>
          <StatRow>
            <Bar $from={100} $to={100} $c="#050505" />
            <div>Break Point<br />Conversions</div>
            <Bar $from={0} $to={0} $c="#050505" />
            <Percent>0%</Percent>
            <div>0<br />Aces</div>
          </StatRow>
          <StatRow>
            <Bar $from={38} $to={100} $c="#3f83cf" />
            <div>Win % 1st Serve</div>
            <Bar $from={0} $to={42} $c="#d39a4d" />
            <Percent>62%</Percent>
            <div>3<br />Double Faults</div>
          </StatRow>
        </Stats>
        <Strip />
        <Feed>
          <Hot>55</Hot>
          <span>30</span>
          <span>15</span>
        </Feed>
      </div>
      <Gutter />
      <Chat>
        <ChatInput aria-label="Сообщение" defaultValue="|" />
        <ChatTools>
          <Tick type="checkbox" aria-label="Отметить" />
          0 /256
          <Glyph w={9} color="none" fill="#444"><path d="M1 1l14 7-14 7 3-7z" /></Glyph>
        </ChatTools>
        <HideChat>
          <Glyph w={5} box="0 0 8 8" color="none" fill="#444"><path d="M0 6h8L4 1z" /></Glyph>
          Hide chat
        </HideChat>
        <Band />
        <StatsHead>Статистика</StatsHead>
        <Versus>
          <ShirtIcon />
          <span>Lucca Liu/Avi Shugar</span>
          <span>Filippo Giovannini/Umberto Giovannini</span>
          <ShirtIcon />
        </Versus>
        <Sets>
          <SetButton $on>матч</SetButton>
          <SetButton>S/1</SetButton>
        </Sets>
        <Totals><span>0</span><span>эйс</span><span>8</span></Totals>
      </Chat>
    </Page>
  </Instance>
);

const Bottom = () => (
  <>
    <PaneTabs>
      {paneTabs.map(([t, w]) => (
        <PaneTab key={t} $w={w} $on={t === "Инстансы"}>{t}</PaneTab>
      ))}
    </PaneTabs>
    <Filters>
      <AllButton>Все</AllButton>
      {legend.map(([t, c, w]) => (
        <Legend key={t} $w={w} $c={c}>{t}</Legend>
      ))}
      <Spacer />
      <ZoomBox>
        <ZoomSelect aria-label="Масштаб"><option>40%</option></ZoomSelect>
        <Down w={4} />
      </ZoomBox>
    </Filters>
    <Viewer>
      <BrowserInstance />
      <Scroll>
        <Glyph w={4} h={10} box="0 0 8 20" color="none" fill="#333"><path d="M0 12h8L4 7z" /></Glyph>
        <Thumb />
        <Glyph w={4} h={10} box="0 0 8 20" color="none" fill="#333"><path d="M0 8h8l-4 5z" /></Glyph>
      </Scroll>
    </Viewer>
  </>
);

const RemoteBars = () => (
  <>
    <Taskbar $h={22} $tone="#020a14">
      <Apps>
        <App28 aria-label="Пуск"><WinLogo w={9} /></App28>
        <App28 $run aria-label="Проводник"><SmallFolder /></App28>
        <App28 aria-label="Paint">
          <Glyph w={13} color="none">
            <path d="M8 3c5-1 8 2 7 6s-6 5-9 5-5-2-5-5 3-5 7-6z" fill="#cfe0ea" />
            <circle cx="5" cy="8" r="1.500" fill="#d9442f" /><circle cx="9" cy="6" r="1.500" fill="#3c9b4c" /><circle cx="6" cy="11.500" r="1.500" fill="#2f74c9" />
            <path d="M15 0l-5 10" stroke="#d99a3b" strokeWidth="2" />
          </Glyph>
        </App28>
        <App28 $run $on aria-label="ZennoBox"><Trefoil w={15} c="#1666e8" /></App28>
      </Apps>
      <Spacer />
      <Slot $w={14} aria-label="Значки"><Up /></Slot>
      <Slot $w={13} aria-label="Сеть"><Net /></Slot>
      <Slot $w={13} aria-label="Звук"><Speaker muted /></Slot>
      <Slot $w={18}>ENG</Slot>
      <SmallClock>{"11:33\n29.08.2024"}</SmallClock>
      <Slot $w={22} aria-label="Уведомления"><Note /></Slot>
    </Taskbar>
    <VmStatus>
      Чтобы вернуться к компьютеру, переместите указатель мыши наружу или нажмите Ctrl+Alt.
      <Spacer />
      <Slot $w={12} aria-label="Диск"><Glyph w={9} color="#888" sw={1.5}><path d="M1 13V8l2-5h10l2 5v5zM1 9h14" /><circle cx="12" cy="12" r="3" fill="#6cc02a" stroke="none" /></Glyph></Slot>
      <Slot $w={12} aria-label="CD"><Glyph w={8} color="#cfcfcf" sw={1.5}><circle cx="8" cy="8" r="6" strokeDasharray="3 2" /></Glyph></Slot>
      <Slot $w={12} aria-label="Сеть"><Glyph w={9} color="#888" sw={1.5}><path d="M1 2h8v6H1zM7 7h7v6H7z" /><circle cx="12" cy="12" r="3" fill="#6cc02a" stroke="none" /></Glyph></Slot>
      <Slot $w={12} aria-label="Звук"><Glyph w={9} color="#888" sw={1.5}><path d="M1 6h3l4-4v12l-4-4H1zM10 4q3 4 0 8" /><circle cx="12" cy="12" r="3" fill="#6cc02a" stroke="none" /></Glyph></Slot>
      <Divider $before={3} $after={4} $color="#c3c7c9" />
      <Slot $w={8} aria-label="Сообщения"><Glyph w={8} color="none"><path d="M0 0h16v12l-4 4H0z" fill="#2fdcc6" /><path d="M16 12l-4 4v-4z" fill="#178c80" /></Glyph></Slot>
    </VmStatus>
    <Taskbar $h={23} $tone="linear-gradient(90deg, #171c20, #1b1d1e 40%, #322c25 58%, #20262a 70%, #25262a 82%, #471e1c 90%, #2a1e20)">
      <Apps>
        <App28 aria-label="Пуск"><WinLogo w={9} /></App28>
        <App28 aria-label="Проводник"><SmallFolder /></App28>
        <App28 aria-label="Документ"><Glyph w={9} h={12} box="0 0 9 12" color="none"><path d="M0 0h6l3 3v9H0z" fill="#f5f5f5" /><path d="M6 0v3h3" fill="#bbb" /></Glyph></App28>
        <App28 $run aria-label="AnyDesk">
          <Glyph w={14} color="none"><path d="M0 0h16v16H0z" fill="#ef4036" /><path d="M6 5l3 3-3 3-3-3zM9 5.500l1-.5 3 3-3 3-1-.5L11 8z" fill="#fff" /></Glyph>
        </App28>
        <App28 $run $on aria-label="VMware"><VmwareMark w={14} /></App28>
      </Apps>
      <Spacer />
      <Slot $w={14} aria-label="Значки"><Up /></Slot>
      <Slot $w={13} aria-label="Питание"><Glyph w={9} sw={1.6}><path d="M3 5h9v6H3zM12 6h3v4h-3M5 2h6M3 14h9" /></Glyph></Slot>
      <Slot $w={13} aria-label="Сеть"><Net /></Slot>
      <Slot $w={13} aria-label="Звук"><Speaker /></Slot>
      <Slot $w={18}>ENG</Slot>
      <SmallClock>{"11:34\n29.08.2024"}</SmallClock>
      <Slot $w={20} aria-label="Уведомления">
        <Glyph w={12} color="none"><path d="M1 1h12v10H4l-3 3z" fill="#f1f1f1" /><path d="M3 4h8M3 7h6" stroke="#444" /><circle cx="12" cy="12" r="4" fill="#777" stroke="#ddd" strokeWidth=".8" /><path d="M13 14.500v-5l-2.500 3.500H14" stroke="#fff" /></Glyph>
      </Slot>
    </Taskbar>
  </>
);

const HostBar = () => (
  <Host>
    <StartButton aria-label="Пуск"><WinLogo w={29} /></StartButton>
    <HostApp aria-label="Блокнот">
      <Glyph w={30} h={28} box="0 0 30 28" color="none">
        <path d="M10 3l19-1-5 24-4 1z" fill="#d9e3e6" />
        <path d="M9 3l17 1-7 23L1 23z" fill="#4aa6b8" />
        <path d="M9 3l17 1-4 12L5 14z" fill="#8ecdd9" />
        <path d="M9 3l17 1-1 3L8 6z" fill="#c4e6ec" />
        <path d="M10 1v3M13 1v3M16 1v3M19 1v3M22 2v3" stroke="#e8eef0" />
      </Glyph>
    </HostApp>
    <HostApp aria-label="Редактор">
      <Glyph w={30} h={32} box="0 0 30 32" color="none">
        <path d="M1 7h26v24H1z" fill="#f1f1f1" />
        <path d="M27 1c3 6 1 12-3 17-4 6-8 9-13 10-1-6 1-12 6-17 4-4 6-6 10-10z" fill="#5e7d2d" />
        <path d="M27 1c2 4 2 8 0 12l-7-4z" fill="#3f4f35" />
        <path d="M16 12c5 1 7 3 7 7-4 6-7 8-11 9-1-6 1-11 4-16z" fill="#e08a2b" />
        <path d="M13 17c4 1 5 3 5 6-3 4-5 5-7 5 0-4 1-7 2-11z" fill="#d9502b" />
        <path d="M12 22l4 3-5 3z" fill="#2c7ea8" />
        <path d="M25 5Q16 16 8 31" stroke="#e6d59a" />
      </Glyph>
    </HostApp>
    <HostApp $open aria-label="Chrome">
      <Glyph w={32} box="0 0 32 32" color="none">
        <circle cx="16" cy="16" r="16" fill="#f7c72b" />
        <path d="M2.100 8A16 16 0 0 1 29.900 8H16a8 8 0 0 0-7 4z" fill="#e43e30" />
        <path d="M2.100 8A16 16 0 0 0 16 32l7-12a8 8 0 0 1-14 0z" fill="#2b9b4a" />
        <circle cx="16" cy="16" r="7.800" fill="#fff" /><circle cx="16" cy="16" r="6.200" fill="#2a75e8" />
      </Glyph>
    </HostApp>
    <HostApp aria-label="Проводник"><Folder w={32} /></HostApp>
    <HostApp aria-label="Photoshop"><PsTile>Ps</PsTile></HostApp>
    <HostApp $open aria-label="Telegram">
      <Glyph w={28} box="0 0 28 28" color="none">
        <circle cx="14" cy="14" r="14" fill="#2a9fdb" />
        <path d="M5 14 22 7l-3 15-5-4-3 3-1-5z" fill="#fff" /><path d="M10 16l9-6-7 7-1 4z" fill="#b9d9ec" />
      </Glyph>
      <Badge>348</Badge>
    </HostApp>
    <HostApp $on aria-label="AnyDesk">
      <Glyph w={32} box="0 0 32 32" color="none"><path d="M0 0h32v32H0z" fill="#ff3f35" /><path d="M12 10l6.500 6-6.500 6-6-6zM17 11.500l2-1.500 6.500 6-6.500 6-2-1.500 5-4.500z" fill="#fff" /></Glyph>
    </HostApp>
    <Spacer />
    <Slot $w={24} aria-label="Защита"><Glyph w={16} color="#dfe6ea" sw={1.4}><path d="M1 5h14v10H1z" fill="#3b4a55" /><path d="M5 5V3q3-4 6 0v2M8 7v6M5 9v3h6V9" /></Glyph></Slot>
    <Slot $w={24} aria-label="Экран"><Glyph w={16} color="#222" sw={1.4}><path d="M1 1h14v10H1z" fill="#8b8b8b" /><path d="M1 14h5M9 14h5" stroke="#eee" strokeWidth="2.500" /></Glyph></Slot>
    <Slot $w={24} aria-label="Java"><Glyph w={16} color="none"><path d="M2 2h12v9H2z" fill="#e9e4dc" /><circle cx="8" cy="6.500" r="3.500" fill="#ef8d2f" /><path d="M1 12h14v1.500H1z" fill="#ccc" /><path d="M7 5l3 1-3 2" stroke="#fff" /></Glyph></Slot>
    <Slot $w={24} aria-label="Центр поддержки"><Glyph w={16} color="none"><path d="M2 1v14" stroke="#fff" strokeWidth="1.500" /><path d="M3 2q4-2 8 1v7q-4-3-8-1z" fill="#f4f4f4" /><circle cx="11.500" cy="11.500" r="4.300" fill="#dd2727" /><path d="M10 10l3 3M13 10l-3 3" stroke="#fff" strokeWidth="1.200" /></Glyph></Slot>
    <Slot $w={24} aria-label="Сеть"><Signal c="#f4f4f4" w={14} /></Slot>
    <Slot $w={24} aria-label="Устройство"><Glyph w={16} color="none"><path d="M0 7l8-3 7 1-6 4z" fill="#3d4144" /><path d="M1 8l8 1" stroke="#aaa" /><circle cx="11" cy="11.500" r="4" fill="#2ca82c" /><path d="M9 11.500l1.500 1.500 2.500-3" stroke="#fff" strokeWidth="1.200" /></Glyph></Slot>
    <Slot $w={24} aria-label="AnyDesk"><Glyph w={16} color="none"><path d="M0 0h16v16H0z" fill="#ff3f35" /><path d="M6.500 5l3 3-3 3-3-3zM9 5.500l1-.5 3 3-3 3-1-.5L11 8z" fill="#fff" /></Glyph></Slot>
    <Slot $w={24} aria-label="Telegram"><Glyph w={16} color="none"><circle cx="7" cy="7" r="7" fill="#2a9fdb" /><path d="M2 7l6-3v6z" fill="#fff" /><rect x="6" y="5" width="10" height="10" rx="2" fill="#ee3e3e" /><path d="M7 12h1M9 12h1" stroke="#fff" /><circle cx="13" cy="8.500" r="1.300" stroke="#fff" /><circle cx="13" cy="11.500" r="1.500" stroke="#fff" /></Glyph></Slot>
    <Slot $w={24} aria-label="Батарея"><Glyph w={16} color="#f4f4f4" sw={1.6}><path d="M7.500 3V1.500h4V3H13v12H6V3z" fill="#444" /></Glyph></Slot>
    <Slot $w={24} aria-label="Клавиатура"><Glyph w={16} color="#f4f4f4" sw={1.6}><path d="M1 3h14v10.500H1z" fill="#222" /><path d="M2 9h5M9 9h5" strokeWidth="2" /></Glyph></Slot>
    <Slot $w={24} aria-label="Звук"><Glyph w={16} color="none"><path d="M1 5h3l5-4v14l-5-4H1z" fill="#f4f4f4" /><circle cx="11.500" cy="11.500" r="4.300" fill="#dd2727" /><path d="M9 9l5 5" stroke="#fff" strokeWidth="1.200" /></Glyph></Slot>
    <Lang $w={42}>ENG</Lang>
    <HostClock>{"11:34\n29.08.2024"}</HostClock>
  </Host>
);

const Activation = ({ bottom }: { bottom: number }) => (
  <Watermark $bottom={bottom}>
    <strong>Активация Windows</strong>
    Чтобы активировать Windows, перейдите в раздел "Параметры".
  </Watermark>
);

export default function App() {
  return (
    <Shell>
      <Global />
      <AnyDeskBars />
      <Remote>
        <VmwareBars />
        <Zenno>
          <ZennoTop />
          <Work>
            <Sidebar />
            <Right>
              <ProjectTable />
              <Bottom />
            </Right>
          </Work>
          <ZStatus>
            <Glyph w={8} color="#9bdcc6" sw={3}><circle cx="8" cy="8" r="5.500" fill="#1fa97c" /></Glyph>
            <span>Соединение: Подключено / Сервер проверки прокси: Доступен</span>
            <Glyph w={8} color="#27b08a" sw={1.6}><path d="M1.500 1.500h13v13h-13zM8 4v5M5.500 6.500h5M4.500 12h7" /></Glyph>
            <span>Источники: 0/0</span>
            <Glyph w={8} color="#d99a5b" sw={1.6}><path d="M1.500 2h13v9h-13zM8 11v3M4.500 14.500h7" /></Glyph>
            <span>Прокси: 0/0</span>
          </ZStatus>
        </Zenno>
        <RemoteBars />
        <Activation bottom={80} />
        <Activation bottom={50} />
        <Pointer>
          <Glyph w={6} h={10} box="0 0 12 18" color="#333" fill="#fff" sw={1.4}><path d="M1 1v14l3.500-3 2.500 5 2-1-2.500-5H11z" /></Glyph>
        </Pointer>
      </Remote>
      <HostBar />
    </Shell>
  );
}
